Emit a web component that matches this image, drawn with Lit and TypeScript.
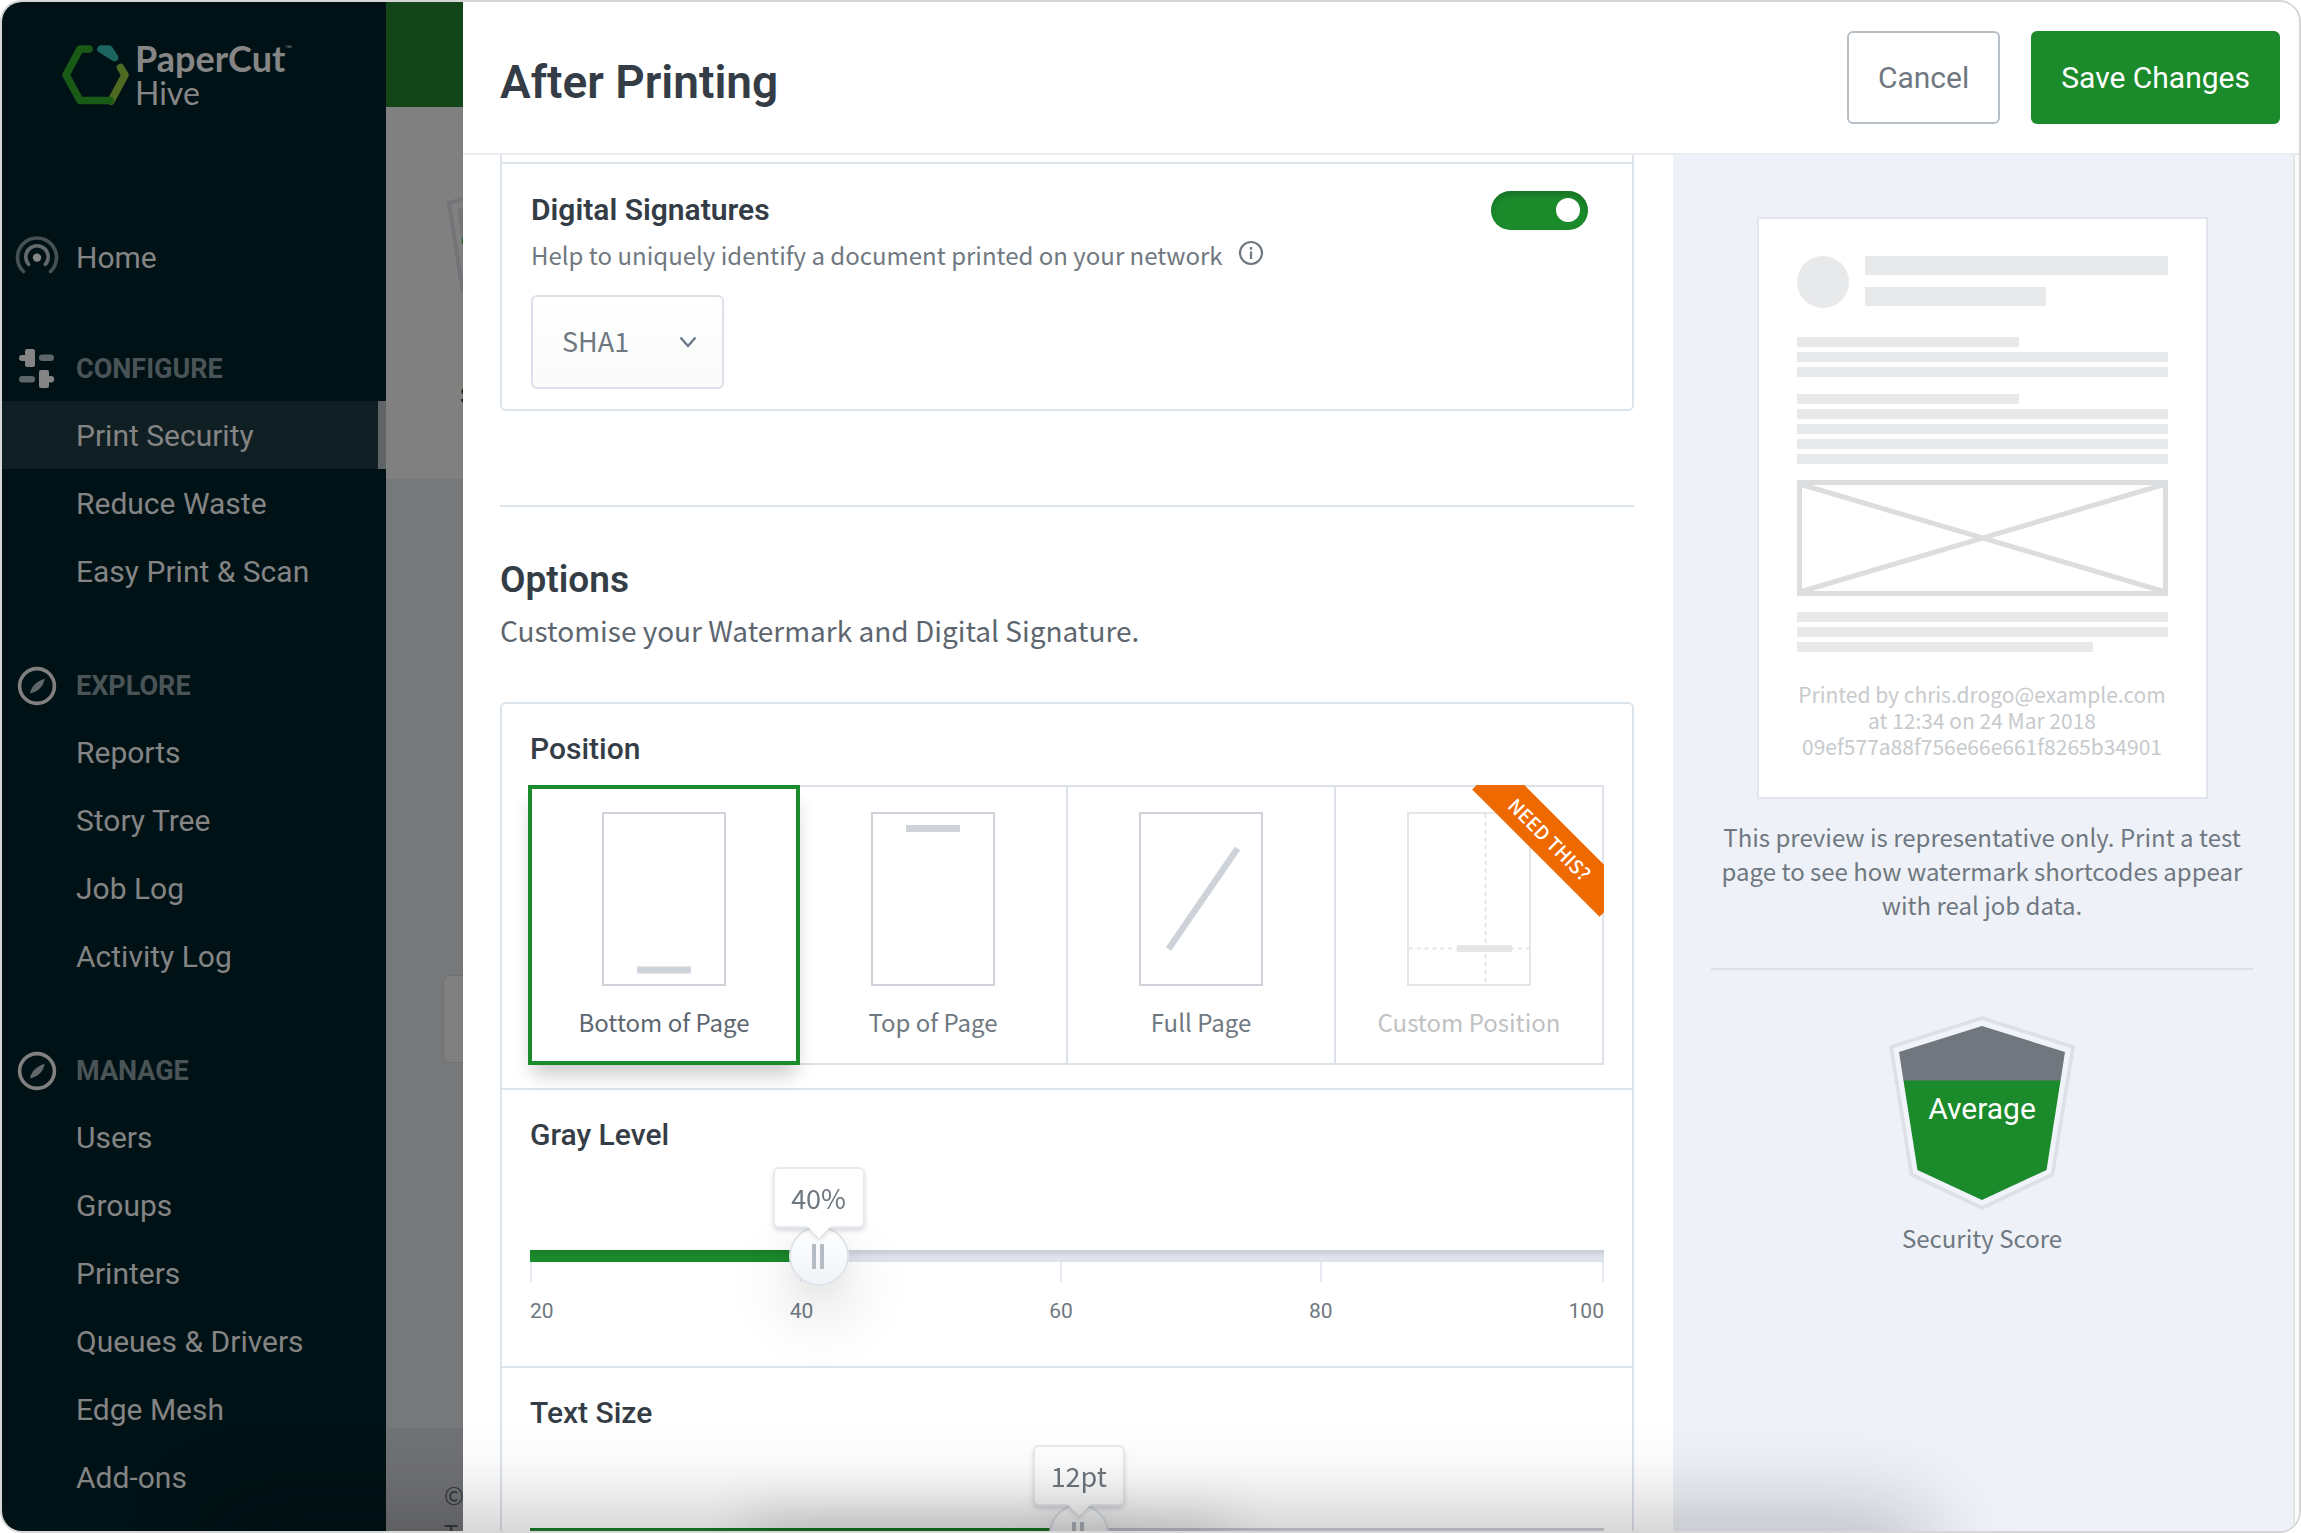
import { LitElement, html, svg, css, nothing } from 'lit';
import { customElement, property, state } from 'lit/decorators.js';
import { classMap } from 'lit/directives/class-map.js';
import { styleMap } from 'lit/directives/style-map.js';

const beacon = svg`
  <path d="M8.5 36.5a19.5 19.5 0 1 1 27 0" fill="none" stroke="#465153" stroke-width="3.6" stroke-linecap="round"/>
  <path d="M13.6 29.4a11.2 11.2 0 1 1 16.8 0" fill="none" stroke="#636a6c" stroke-width="3.6" stroke-linecap="round"/>
  <circle cx="22" cy="22.6" r="4.2" fill="#868686"/>`;

const sliders = svg`
  <path d="M12 2h6a2 2 0 0 1 2 2v14a2 2 0 0 1-2 2h-6a2 2 0 0 1-2-2v-4H7a3 3 0 0 1 0-6h3V4a2 2 0 0 1 2-2z" fill="#848484"/>
  <rect x="24" y="7.6" width="15" height="6.4" rx="3.2" fill="#5d6668"/>
  <path d="M26 23h6a2 2 0 0 1 2 2v4h2a3.2 3.2 0 0 1 0 6.4h-2V39a2 2 0 0 1-2 2h-6a2 2 0 0 1-2-2V25a2 2 0 0 1 2-2z" fill="#848484"/>
  <rect x="4" y="29" width="16" height="6.4" rx="3.2" fill="#5d6668"/>`;

const compass = svg`
  <circle cx="22" cy="22" r="17.4" fill="none" stroke="#808080" stroke-width="3.6"/>
  <path d="M15 29.4C16 24 20 17.500 29.600 14.800 29 21 24 28 15 29.400z" fill="#5f6769"/>`;

interface NavGroup {
  title: string;
  icon: unknown;
  items: string[];
}

const GROUPS: NavGroup[] = [
  { title: 'CONFIGURE', icon: sliders, items: ['Print Security', 'Reduce Waste', 'Easy Print & Scan'] },
  { title: 'EXPLORE', icon: compass, items: ['Reports', 'Story Tree', 'Job Log', 'Activity Log'] },
  {
    title: 'MANAGE',
    icon: compass,
    items: ['Users', 'Groups', 'Printers', 'Queues & Drivers', 'Edge Mesh', 'Add-ons'],
  },
];

@customElement('side-nav')
export class SideNav extends LitElement {
  static styles = css`
    :host { display: block; background: #001216; color: #848484; font-family: Roboto, sans-serif; overflow: hidden; }
    .brand { display: flex; align-items: flex-start; gap: 3px; padding: 38px 0 0 58px; height: 187px; }
    .mark { width: 72px; height: 68px; flex: none; margin-top: 3px; }
    .name { display: flex; flex-direction: column; font-family: Lato, sans-serif; color: #868686; }
    .word { display: flex; font-size: 36px; font-weight: 700; line-height: 36px; }
    .tm { font-size: 9px; font-weight: 400; line-height: 18px; }
    .edition { font-size: 32px; line-height: 34px; }
    .row { display: flex; align-items: center; gap: 17px; padding-left: 13px; height: 65px; }
    .icon { width: 44px; height: 44px; flex: none; }
    a { color: inherit; text-decoration: none; }
    .home { font-size: 30px; height: 60px; margin-bottom: 49px; }
    .group { margin-bottom: 48px; }
    h2 { margin: 0; font-size: 27px; font-weight: 700; color: #4a5456; }
    ul { list-style: none; margin: 0; padding: 0; }
    .link { display: flex; align-items: center; height: 68px; padding-left: 74px; font-size: 30px; }
    .active { background: #101f23; border-right: 8px solid #5f6567; }
  `;

  render() {
    return html`
      <div class="brand">
        <svg class="mark" viewBox="0 0 72 68" aria-hidden="true">
          <path d="M51 58 65 32 60.500 24.500" fill="none" stroke="#4d6a22" stroke-width="7.6" stroke-linecap="round" stroke-linejoin="round"/>
          <path d="M29 6H20L6 32 20 57.500H50" fill="none" stroke="#1a5a17" stroke-width="7.6" stroke-linecap="round" stroke-linejoin="round"/>
          <path d="M41 6H49L54.500 14.500Z" fill="#1d6660" stroke="#1d6660" stroke-width="7.600" stroke-linejoin="round"/>
        </svg>
        <div class="name">
          <span class="word">PaperCut<span class="tm">™</span></span>
          <span class="edition">Hive</span>
        </div>
      </div>
      <nav>
        <a class="row home" href="#home"><svg class="icon" viewBox="0 0 44 44" aria-hidden="true">${beacon}</svg>Home</a>
        ${GROUPS.map(
          (g) => html`<section class="group">
            <div class="row">
              <svg class="icon" viewBox="0 0 44 44" aria-hidden="true">${g.icon}</svg>
              <h2>${g.title}</h2>
            </div>
            <ul>
              ${g.items.map(
                (item) => html`<li>
                  <a href="#" class=${classMap({ link: true, active: item === 'Print Security' })}>${item}</a>
                </li>`,
              )}
            </ul>
          </section>`,
        )}
      </nav>
    `;
  }
}

@customElement('value-slider')
export class ValueSlider extends LitElement {
  @property() label = '';
  @property() unit = '';
  @property({ type: Number }) min = 0;
  @property({ type: Number }) max = 100;
  @property({ type: Number }) value = 0;
  @property({ attribute: false }) marks: string[] = [];

  static styles = css`
    :host { display: block; font-family: Roboto, sans-serif; }
    label { display: block; font-size: 30px; font-weight: 500; line-height: 40px; color: #343d46; }
    .track { position: relative; padding-top: 71px; --at: calc(30px + (100% - 60px) * var(--f)); }
    input {
      appearance: none; display: block; position: relative; z-index: 1; width: 100%; height: 60px; margin: 0;
      background: transparent;
    }
    input::-webkit-slider-runnable-track {
      height: 12px;
      background:
        linear-gradient(rgba(0, 0, 0, 0.1), transparent 60%),
        linear-gradient(90deg, #1b8a2b var(--at), #dfe3ed var(--at));
    }
    input::-webkit-slider-thumb {
      appearance: none; box-sizing: border-box; width: 60px; height: 60px; margin-top: -24px;
      border: 2px solid #e0e4e9; border-radius: 50%;
      background:
        linear-gradient(#b5bcc4, #b5bcc4) 21px 16px / 4px 25px no-repeat,
        linear-gradient(#b5bcc4, #b5bcc4) 29px 16px / 4px 25px no-repeat,
        linear-gradient(#ffffff, #f0f4f8);
      box-shadow: 0 28px 60px 8px rgba(0, 0, 0, 0.1), 0 8px 20px rgba(0, 0, 0, 0.04);
    }
    .bubble {
      position: absolute; z-index: 2; top: 12px; left: var(--at); transform: translateX(-50%);
      box-sizing: border-box; min-width: 92px; padding: 0 10px; text-align: center;
      font-family: 'Noto Sans CJK JP', sans-serif; font-size: 27px; line-height: 57px; color: #6f7880;
      background: #fff; border: 2px solid #e9ebf0; border-radius: 6px;
      filter: drop-shadow(0 3px 2px rgba(40, 50, 70, 0.16));
    }
    .bubble::after {
      content: ''; position: absolute; left: 50%; top: 57px; margin-left: -12px;
      border: 12px solid transparent; border-top-color: #fff; border-bottom-width: 0;
    }
    .scale { display: flex; justify-content: space-between; margin-top: -24px; font-size: 21px; line-height: 30px; color: #6f7880; }
    .mark { display: flex; flex-direction: column; align-items: center; gap: 14px; }
    .mark::before { content: ''; width: 2px; height: 20px; background: #e6e9ef; }
    .mark:first-child { align-items: flex-start; }
    .mark:last-child { align-items: flex-end; }
  `;

  private onInput(e: Event) {
    this.value = Number((e.target as HTMLInputElement).value);
  }

  render() {
    const fraction = (this.value - this.min) / (this.max - this.min);
    return html`
      <label for="range">${this.label}</label>
      <div class="track" style=${styleMap({ '--f': String(fraction) })}>
        <output class="bubble" for="range">${Math.round(this.value)}${this.unit}</output>
        <input id="range" type="range" step="any" min=${this.min} max=${this.max} .value=${String(this.value)} @input=${this.onInput} />
      </div>
      <div class="scale">${this.marks.map((m) => html`<span class="mark">${m}</span>`)}</div>
    `;
  }
}

interface Placement {
  id: string;
  name: string;
  art: unknown;
  locked?: boolean;
}

const PLACEMENTS: Placement[] = [
  { id: 'bottom', name: 'Bottom of Page', art: svg`<path d="M35 158h54" stroke-width="7"/>` },
  { id: 'top', name: 'Top of Page', art: svg`<path d="M35 16.500h54" stroke-width="7"/>` },
  { id: 'full', name: 'Full Page', art: svg`<path d="M29.500 137 98.500 36.500" stroke-width="6.500"/>` },
  {
    id: 'custom',
    name: 'Custom Position',
    locked: true,
    art: svg`<path d="M50 136.500h55" stroke-width="7"/>
      <path d="M78.500 2v170M2 136.500h120" stroke-width="2" stroke-dasharray="4 3.800"/>`,
  },
];

@customElement('position-picker')
export class PositionPicker extends LitElement {
  @state() private selected = 'bottom';

  static styles = css`
    :host { display: block; font-family: Roboto, sans-serif; }
    fieldset { border: 0; margin: 0; padding: 0; min-width: 0; }
    legend { padding: 0; font-size: 30px; font-weight: 500; line-height: 40px; color: #343d46; }
    .tiles { display: grid; grid-template-columns: repeat(4, minmax(0, 1fr)); margin-top: 16px; padding-right: 2px; }
    .tile {
      position: relative; display: flex; flex-direction: column; align-items: center; gap: 19px;
      box-sizing: border-box; height: 280px; padding-top: 25px; margin-right: -2px;
      border: 2px solid #dce2e8; background: #fff;
      font-family: 'Noto Sans CJK JP', sans-serif; font-size: 24px; line-height: 34px; color: #6f7880;
    }
    .selected {
      z-index: 1; margin-left: -2px; padding-top: 23px; border: 4px solid #1b8a2b; color: #5d666f;
      box-shadow: 0 14px 18px -4px rgba(0, 0, 0, 0.2);
    }
    .locked { color: #bfc1c3; }
    input { position: absolute; opacity: 0; margin: 0; }
    .page { width: 124px; height: 174px; fill: none; stroke: #ced3da; }
    .locked .page { stroke: #e6e6e6; }
    .corner { position: absolute; inset: -2px; overflow: hidden; }
    .ribbon {
      position: absolute; top: 34px; right: -36px; width: 180px; transform: rotate(45deg); text-align: center;
      font-size: 19px; font-weight: 500; line-height: 40px; background: #ee6a00; color: #fff;
    }
  `;

  render() {
    return html`<fieldset>
      <legend>Position</legend>
      <div class="tiles">
        ${PLACEMENTS.map(
          (p) => html`<label class=${classMap({ tile: true, selected: p.id === this.selected, locked: !!p.locked })}>
            <input type="radio" name="position" value=${p.id} ?disabled=${p.locked} .checked=${p.id === this.selected}
              @change=${() => (this.selected = p.id)} />
            <svg class="page" viewBox="0 0 124 174" aria-hidden="true">
              <rect x="1" y="1" width="122" height="172" stroke-width="2"/>${p.art}
            </svg>
            <span>${p.name}</span>
            ${p.locked ? html`<span class="corner"><span class="ribbon">NEED THIS?</span></span>` : nothing}
          </label>`,
        )}
      </div>
    </fieldset>`;
  }
}

@customElement('preview-pane')
export class PreviewPane extends LitElement {
  static styles = css`
    :host {
      display: flex; flex-direction: column; align-items: center; padding: 62px 40px 0 38px; background: #eef1f7;
      font-family: 'Noto Sans CJK JP', sans-serif; color: #6f7880; text-align: center;
    }
    .paper { box-sizing: border-box; width: 451px; padding: 37px 38px 38px; background: #fff; border: 2px solid #e3e7ed; }
    .head { display: grid; grid-template-columns: 52px 1fr; column-gap: 16px; }
    .avatar { height: 52px; border-radius: 50%; background: #e8e9eb; }
    .titles { display: grid; gap: 12px; align-content: start; }
    .thick, .line { background: #e8e9eb; }
    .thick { height: 19px; }
    .line { height: 10px; }
    .mid { width: 60%; }
    .long { width: 80%; }
    .lines { display: grid; gap: 5px; }
    .first { margin-top: 29px; }
    .second { margin-top: 17px; }
    .third { margin-top: 16px; }
    .image { display: block; width: 100%; height: 116px; margin-top: 16px; fill: none; stroke: #dcddde; stroke-width: 5; }
    .stamp { margin: 29px -10px 0; font-size: 21px; line-height: 26px; color: #c7cacd; }
    .note { margin: 21px 0 0; font-size: 24px; line-height: 34px; }
    hr { width: 100%; height: 2px; margin: 46px 0 0; border: 0; background: #dde1e7; }
    .shield { width: 186px; height: 194px; margin-top: 46px; }
    .grade { font: 400 30px Roboto, sans-serif; fill: #fff; text-anchor: middle; }
    .score { margin: 11px 0 0; font-size: 24px; line-height: 34px; }
  `;

  render() {
    return html`
      <div class="paper">
        <div class="head">
          <div class="avatar"></div>
          <div class="titles"><div class="thick"></div><div class="thick mid"></div></div>
        </div>
        <div class="lines first"><div class="line mid"></div><div class="line"></div><div class="line"></div></div>
        <div class="lines second">
          <div class="line mid"></div><div class="line"></div><div class="line"></div><div class="line"></div><div class="line"></div>
        </div>
        <svg class="image" viewBox="0 0 371 116" preserveAspectRatio="none" aria-hidden="true">
          <path d="M2.500 2.500h366v111h-366zM2.500 4 368.500 112M2.500 112 368.500 4"/>
        </svg>
        <div class="lines third"><div class="line"></div><div class="line"></div><div class="line long"></div></div>
        <div class="stamp">Printed by chris.drogo@example.com<br />at 12:34 on 24 Mar 2018<br />09ef577a88f756e66e661f8265b34901</div>
      </div>
      <p class="note">This preview is representative only. Print a test page to see how watermark shortcodes appear with real job data.</p>
      <hr />
      <svg class="shield" viewBox="0 0 186 194" role="img" aria-label="Average">
        <path d="M93 2 184 31 163.500 158.500 93 192 22.500 158.500 2 31Z" fill="#f0f3f9" stroke="#dde0e5" stroke-width="3.600" stroke-linejoin="round"/>
        <path d="M93 10 176 36 171.500 65H14.500L10 36Z" fill="#70777f"/>
        <path d="M14.500 64.500H171.500L157.500 154 93 184 28.500 154Z" fill="#1b8a2b"/>
        <text class="grade" x="93" y="103">Average</text>
      </svg>
      <p class="score">Security Score</p>
    `;
  }
}

@customElement('app-root')
export class AppRoot extends LitElement {
  static styles = css`
    :host { display: block; height: 100vh; background: #fff; font-family: Roboto, sans-serif; color: #343d46; }
    .window {
      position: relative; box-sizing: border-box; height: 100%; display: grid; grid-template-columns: 384px 77px minmax(0, 1fr);
      border: 2px solid #d6d6d6; border-radius: 22px; overflow: hidden;
    }
    .behind { display: flex; flex-direction: column; overflow: hidden; background: #77787a; white-space: nowrap; }
    .bar { height: 105px; flex: none; background: #124517; }
    .hero { height: 372px; flex: none; overflow: hidden; background: #808080; }
    .sheet { display: block; width: 18px; height: 100px; margin: 90px 0 0 60px; }
    .hero p { margin: 82px 0 0 74px; font-size: 24px; line-height: 34px; color: #1d2126; }
    .filler { flex: 1; padding: 496px 0 0 57px; box-sizing: border-box; }
    .field { height: 86px; border: 1px solid #707173; border-right: 0; border-radius: 6px 0 0 6px; background: #808080; }
    .legal { box-sizing: border-box; height: 103px; flex: none; padding: 48px 0 0 58px; background: #717276; font: 24px/38px 'Noto Sans CJK JP', sans-serif; color: #35383c; }
    .dialog { display: flex; flex-direction: column; min-width: 0; min-height: 0; background: #fff; }
    header {
      box-sizing: border-box; height: 153px; flex: none; display: flex; gap: 31px; padding: 29px 19px 0 37px;
      border-bottom: 2px solid #eaecf0;
    }
    h1 { flex: 1; margin: 5px 0 0; font-size: 46px; font-weight: 600; line-height: 92px; }
    .button { height: 93px; padding: 0 30px; border: 0; border-radius: 6px; font: 30px Roboto, sans-serif; }
    .cancel { padding: 0 29px; background: #fff; border: 2px solid #b6bec7; color: #6f7880; }
    .save { background: #1b8a2b; color: #fff; }
    .content { flex: 1; display: grid; grid-template-columns: minmax(0, 1fr) 620px 6px; min-height: 0; overflow: hidden; }
    .gutter { background: #fafafa; border-left: 2px solid #e3e4e6; }
    .form { padding: 0 39px 0 37px; min-height: 0; }
    .card { border: 2px solid #dce3e9; border-radius: 6px; }
    .continued { border-top: 0; border-radius: 0 0 6px 6px; padding-top: 7px; }
    .signatures { border-top: 2px solid #dce3e9; padding: 26px 44px 20px 29px; }
    .title-row { display: flex; align-items: center; justify-content: space-between; height: 40px; }
    h3 { margin: 0; font-size: 30px; font-weight: 600; line-height: 40px; }
    .toggle {
      appearance: none; position: relative; width: 97px; height: 39px; margin: 0; border-radius: 20px; background: #1b8a2b;
      box-shadow: inset 0 4px 5px rgba(0, 0, 0, 0.16);
    }
    .toggle::before {
      content: ''; position: absolute; right: 8px; top: 7px; width: 24px; height: 24px; border-radius: 50%; background: #fff;
    }
    .help { display: flex; align-items: center; gap: 15px; margin: 8px 0 23px; font: 24px/34px 'Noto Sans CJK JP', sans-serif; color: #6f7880; }
    .info { width: 26px; height: 26px; margin-bottom: 4px; fill: none; stroke: #6f7880; stroke-width: 2.2; }
    .select { display: grid; width: 193px; align-items: center; }
    select {
      grid-area: 1 / 1; appearance: none; height: 94px; padding: 0 0 3px 29px; border: 2px solid #dde0e8; border-radius: 6px;
      background: linear-gradient(#fff, #f9fafa); font: 27px 'Noto Sans CJK JP', sans-serif; color: #6f7880;
    }
    .chevron { grid-area: 1 / 1; justify-self: end; width: 18px; height: 12px; margin-right: 27px; fill: none; stroke: #6b7a88; stroke-width: 2.4; pointer-events: none; }
    .rule { height: 2px; margin: 94px 0 51px; border: 0; background: #dce3e9; }
    h2 { margin: 0; font-size: 37px; font-weight: 600; line-height: 44px; }
    .lead { margin: 8px 0 52px; font: 28px/40px 'Noto Sans CJK JP', sans-serif; color: #5d666f; }
    .part { padding: 25px 28px 23px; }
    .measure { padding-bottom: 40px; border-top: 2px solid #dce3e9; }
    .glow { position: absolute; inset: auto 0 0; height: 120px; overflow: hidden; pointer-events: none; z-index: 3; }
    .wide, .core { position: absolute; top: 120px; height: 60px; }
    .wide { left: 10%; right: 17%; box-shadow: 0 0 90px 14px rgba(0, 0, 0, 0.26); }
    .core { left: 33%; right: 47%; box-shadow: 0 0 60px 8px rgba(0, 0, 0, 0.18); }
  `;

  render() {
    return html`
      <div class="window">
        <side-nav></side-nav>
        <div class="behind">
          <div class="bar"></div>
          <div class="hero">
            <svg class="sheet" viewBox="0 0 18 100" aria-hidden="true">
              <path d="M20 1 3 6 17 96" fill="none" stroke="#737378" stroke-width="4"/>
              <path d="M20 10 11 12 18 58Z" fill="#757578"/>
              <path d="M15.500 41h4v6h-4z" fill="#2c6a35"/>
            </svg>
            <p>S</p>
          </div>
          <div class="filler"><div class="field"></div></div>
          <div class="legal">©<br />T</div>
        </div>
        <section class="dialog" role="dialog" aria-labelledby="dialog-title">
          <header>
            <h1 id="dialog-title">After Printing</h1>
            <button class="button cancel" type="button">Cancel</button>
            <button class="button save" type="button">Save Changes</button>
          </header>
          <div class="content">
            <div class="form">
              <div class="card continued">
                <div class="signatures">
                  <div class="title-row">
                    <h3><label for="signatures">Digital Signatures</label></h3>
                    <input id="signatures" class="toggle" type="checkbox" role="switch" checked />
                  </div>
                  <div class="help">
                    Help to uniquely identify a document printed on your network
                    <svg class="info" viewBox="0 0 26 26" aria-hidden="true">
                      <circle cx="13" cy="13" r="11"/><path d="M13 11.500v7.500M13 7v2.800"/>
                    </svg>
                  </div>
                  <div class="select">
                    <select aria-label="Signature algorithm"><option>SHA1</option></select>
                    <svg class="chevron" viewBox="0 0 18 12" aria-hidden="true"><path d="M1.500 1.500 9 10 16.500 1.500"/></svg>
                  </div>
                </div>
              </div>
              <hr class="rule" />
              <h2>Options</h2>
              <p class="lead">Customise your Watermark and Digital Signature.</p>
              <div class="card">
                <div class="part"><position-picker></position-picker></div>
                <div class="part measure">
                  <value-slider label="Gray Level" unit="%" min="20" max="100" value="40.4" .marks=${['20', '40', '60', '80', '100']}></value-slider>
                </div>
                <div class="part measure">
                  <value-slider label="Text Size" unit="pt" min="6" max="18" value="12.14"></value-slider>
                </div>
              </div>
            </div>
            <preview-pane></preview-pane>
            <div class="gutter"></div>
          </div>
        </section>
        <div class="glow"><div class="wide"></div><div class="core"></div></div>
      </div>
    `;
  }
}
